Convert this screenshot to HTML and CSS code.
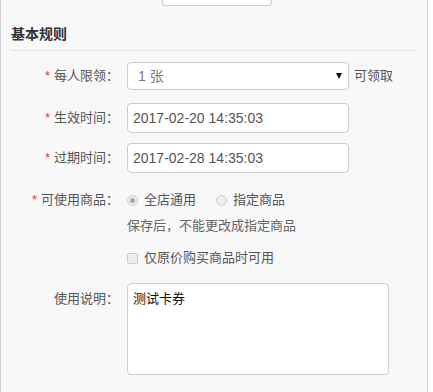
FILE: index.html
```html
<!DOCTYPE html>
<html lang="zh-CN">
<head>
    <meta charset="UTF-8">
    <title>基本规则</title>
    <link rel="stylesheet" href="styles.css">
</head>
<body>
    <div class="panel">
        <div class="top-box"></div>
        <h3 class="section-title">基本规则</h3>
        <form class="rule-form">
            <div class="form-row row-limit">
                <label class="form-label"><em>*</em>每人限领：</label>
                <div class="select">
                    <span>1 张</span>
                    <i class="caret"></i>
                </div>
                <span class="suffix">可领取</span>
            </div>
            <div class="form-row row-start">
                <label class="form-label"><em>*</em>生效时间：</label>
                <input class="text-input" type="text" value="2017-02-20 14:35:03">
            </div>
            <div class="form-row row-end">
                <label class="form-label"><em>*</em>过期时间：</label>
                <input class="text-input" type="text" value="2017-02-28 14:35:03">
            </div>
            <div class="form-row row-goods">
                <label class="form-label"><em>*</em>可使用商品：</label>
                <span class="choice"><i class="radio checked"></i>全店通用</span>
                <span class="choice"><i class="radio"></i>指定商品</span>
            </div>
            <div class="form-row row-hint">
                <span class="form-label"></span>
                <span class="hint">保存后，不能更改成指定商品</span>
            </div>
            <div class="form-row row-check">
                <span class="form-label"></span>
                <span class="choice"><i class="checkbox"></i>仅原价购买商品时可用</span>
            </div>
            <div class="form-row row-desc">
                <label class="form-label">使用说明：</label>
                <textarea class="textarea">测试卡券</textarea>
            </div>
        </form>
    </div>
</body>
</html>
```

FILE: styles.css
```css
body {
    margin: 0;
    background-color: #fff;
    font-family: "Liberation Sans", "Noto Sans CJK SC", sans-serif;
    color: #555;
}
.panel {
    width: 428px;
    height: 392px;
    background-color: #f8f8f8;
    border-left: 1px solid #d4d4d4;
    border-right: 1px solid #d4d4d4;
    box-sizing: border-box;
    overflow: hidden;
}
.top-box {
    width: 110px;
    height: 6px;
    margin-left: 161px;
    background-color: #fff;
    border: 1px solid #ccc;
    border-top: none;
    border-radius: 0 0 4px 4px;
    box-sizing: border-box;
}
.section-title {
    margin: 0 9px 0 10px;
    padding: 18px 0 6px;
    font-size: 14px;
    line-height: 20px;
    font-weight: bold;
    color: #333;
    border-bottom: 1px solid #e5e5e5;
}
.rule-form {
    padding-top: 11px;
}
.form-row {
    display: flex;
    align-items: center;
    font-size: 13px;
    line-height: 20px;
}
.form-label {
    width: 118px;
    flex: none;
    margin-right: 8px;
    text-align: right;
    color: #555;
}
.form-label em {
    font-style: normal;
    color: #e33;
    margin-right: 4px;
}
.row-limit { margin-bottom: 13px; }
.row-start { margin-bottom: 10px; }
.row-end { margin-bottom: 17px; }
.row-goods { margin-bottom: 6px; }
.row-hint { margin-bottom: 12px; }
.row-check { margin-bottom: 15px; }
.row-desc { align-items: flex-start; }
.row-desc .form-label { padding-top: 6px; }

.select {
    width: 222px;
    height: 28px;
    display: flex;
    align-items: center;
    justify-content: space-between;
    padding: 0 6px 0 10px;
    box-sizing: border-box;
    background-color: #fff;
    border: 1px solid #ccc;
    border-radius: 4px;
    font-size: 14px;
    color: #777;
}
.caret {
    width: 0;
    height: 0;
    border-left: 3px solid transparent;
    border-right: 3px solid transparent;
    border-top: 6px solid #111;
}
.suffix {
    margin-left: 5px;
}
.text-input {
    width: 222px;
    height: 30px;
    padding: 0 5px;
    box-sizing: border-box;
    background-color: #fff;
    border: 1px solid #ccc;
    border-radius: 4px;
    font-family: inherit;
    font-size: 14px;
    color: #555;
    outline: none;
}
.choice {
    display: flex;
    align-items: center;
    margin-right: 20px;
}
.radio {
    width: 11px;
    height: 11px;
    margin-right: 6px;
    border: 1px solid #d0d0d0;
    border-radius: 50%;
    background-color: #eee;
    box-sizing: border-box;
    position: relative;
}
.radio.checked::after {
    content: "";
    position: absolute;
    left: 2px;
    top: 2px;
    width: 5px;
    height: 5px;
    border-radius: 50%;
    background-color: #aaa;
}
.checkbox {
    width: 11px;
    height: 11px;
    margin-right: 6px;
    border: 1px solid #ccc;
    border-radius: 2px;
    background-color: #eee;
    box-sizing: border-box;
}
.hint {
    color: #666;
}
.textarea {
    width: 262px;
    height: 92px;
    padding: 5px;
    box-sizing: border-box;
    background-color: #fff;
    border: 1px solid #ccc;
    border-radius: 4px;
    font-family: inherit;
    font-size: 13px;
    line-height: 20px;
    color: #111;
    resize: none;
    outline: none;
}
```
